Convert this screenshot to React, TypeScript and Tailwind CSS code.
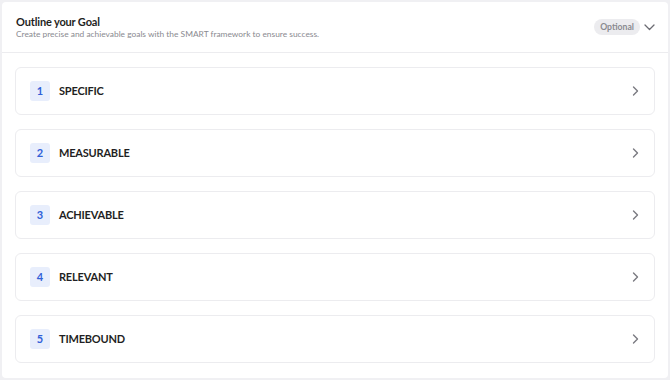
import React from "react";

const steps = ["SPECIFIC", "MEASURABLE", "ACHIEVABLE", "RELEVANT", "TIMEBOUND"];

function ChevronRight() {
  return (
    <svg width="10" height="10" viewBox="0 0 10 10" fill="none" stroke="#7a7a80" strokeWidth="1.4" strokeLinecap="round" strokeLinejoin="round">
      <path d="M3.5 1 L7.5 5 L3.5 9" />
    </svg>
  );
}

function ChevronDown() {
  return (
    <svg width="11" height="7" viewBox="0 0 11 7" fill="none" stroke="#6b6b72" strokeWidth="1.3" strokeLinecap="round" strokeLinejoin="round">
      <path d="M1 1 L5.5 5.5 L10 1" />
    </svg>
  );
}

export default function App() {
  return (
    <div className="w-[670px] h-[380px] bg-[#f0f0f3] p-[2px] font-['Lato',sans-serif]">
      <div className="h-full bg-white rounded-[4px] flex flex-col">
        <div className="h-[51px] flex items-center justify-between pl-[14px] pr-[13px] border-b border-[#ececef]">
          <div className="flex flex-col pt-[1px]">
            <h1 className="text-[11px] leading-[14px] font-bold tracking-[-0.15px] text-[#1f1f23]">Outline your Goal</h1>
            <p className="text-[8.4px] leading-[11px] text-[#8a8a90]">
              Create precise and achievable goals with the SMART framework to ensure success.
            </p>
          </div>
          <div className="flex items-center gap-[4px]">
            <span className="h-[16px] px-[6px] rounded-full bg-[#ececef] text-[8.7px] font-bold text-[#8a8a90] flex items-center">
              Optional
            </span>
            <ChevronDown />
          </div>
        </div>
        <div className="flex-1 flex flex-col gap-[14px] px-[13px] pt-[14px]">
          {steps.map((s, i) => (
            <div
              key={s}
              className="h-[48px] border border-[#ececef] rounded-[6px] flex items-center pl-[14px] pr-[14px]"
            >
              <span className="w-[20px] h-[20px] rounded-[3px] bg-[#e8eefc] text-[#3060d8] text-[11px] font-bold flex items-center justify-center">
                {i + 1}
              </span>
              <span className="ml-[9px] text-[11px] font-bold tracking-[-0.2px] text-[#1f1f23]">{s}</span>
              <span className="ml-auto">
                <ChevronRight />
              </span>
            </div>
          ))}
        </div>
      </div>
    </div>
  );
}
